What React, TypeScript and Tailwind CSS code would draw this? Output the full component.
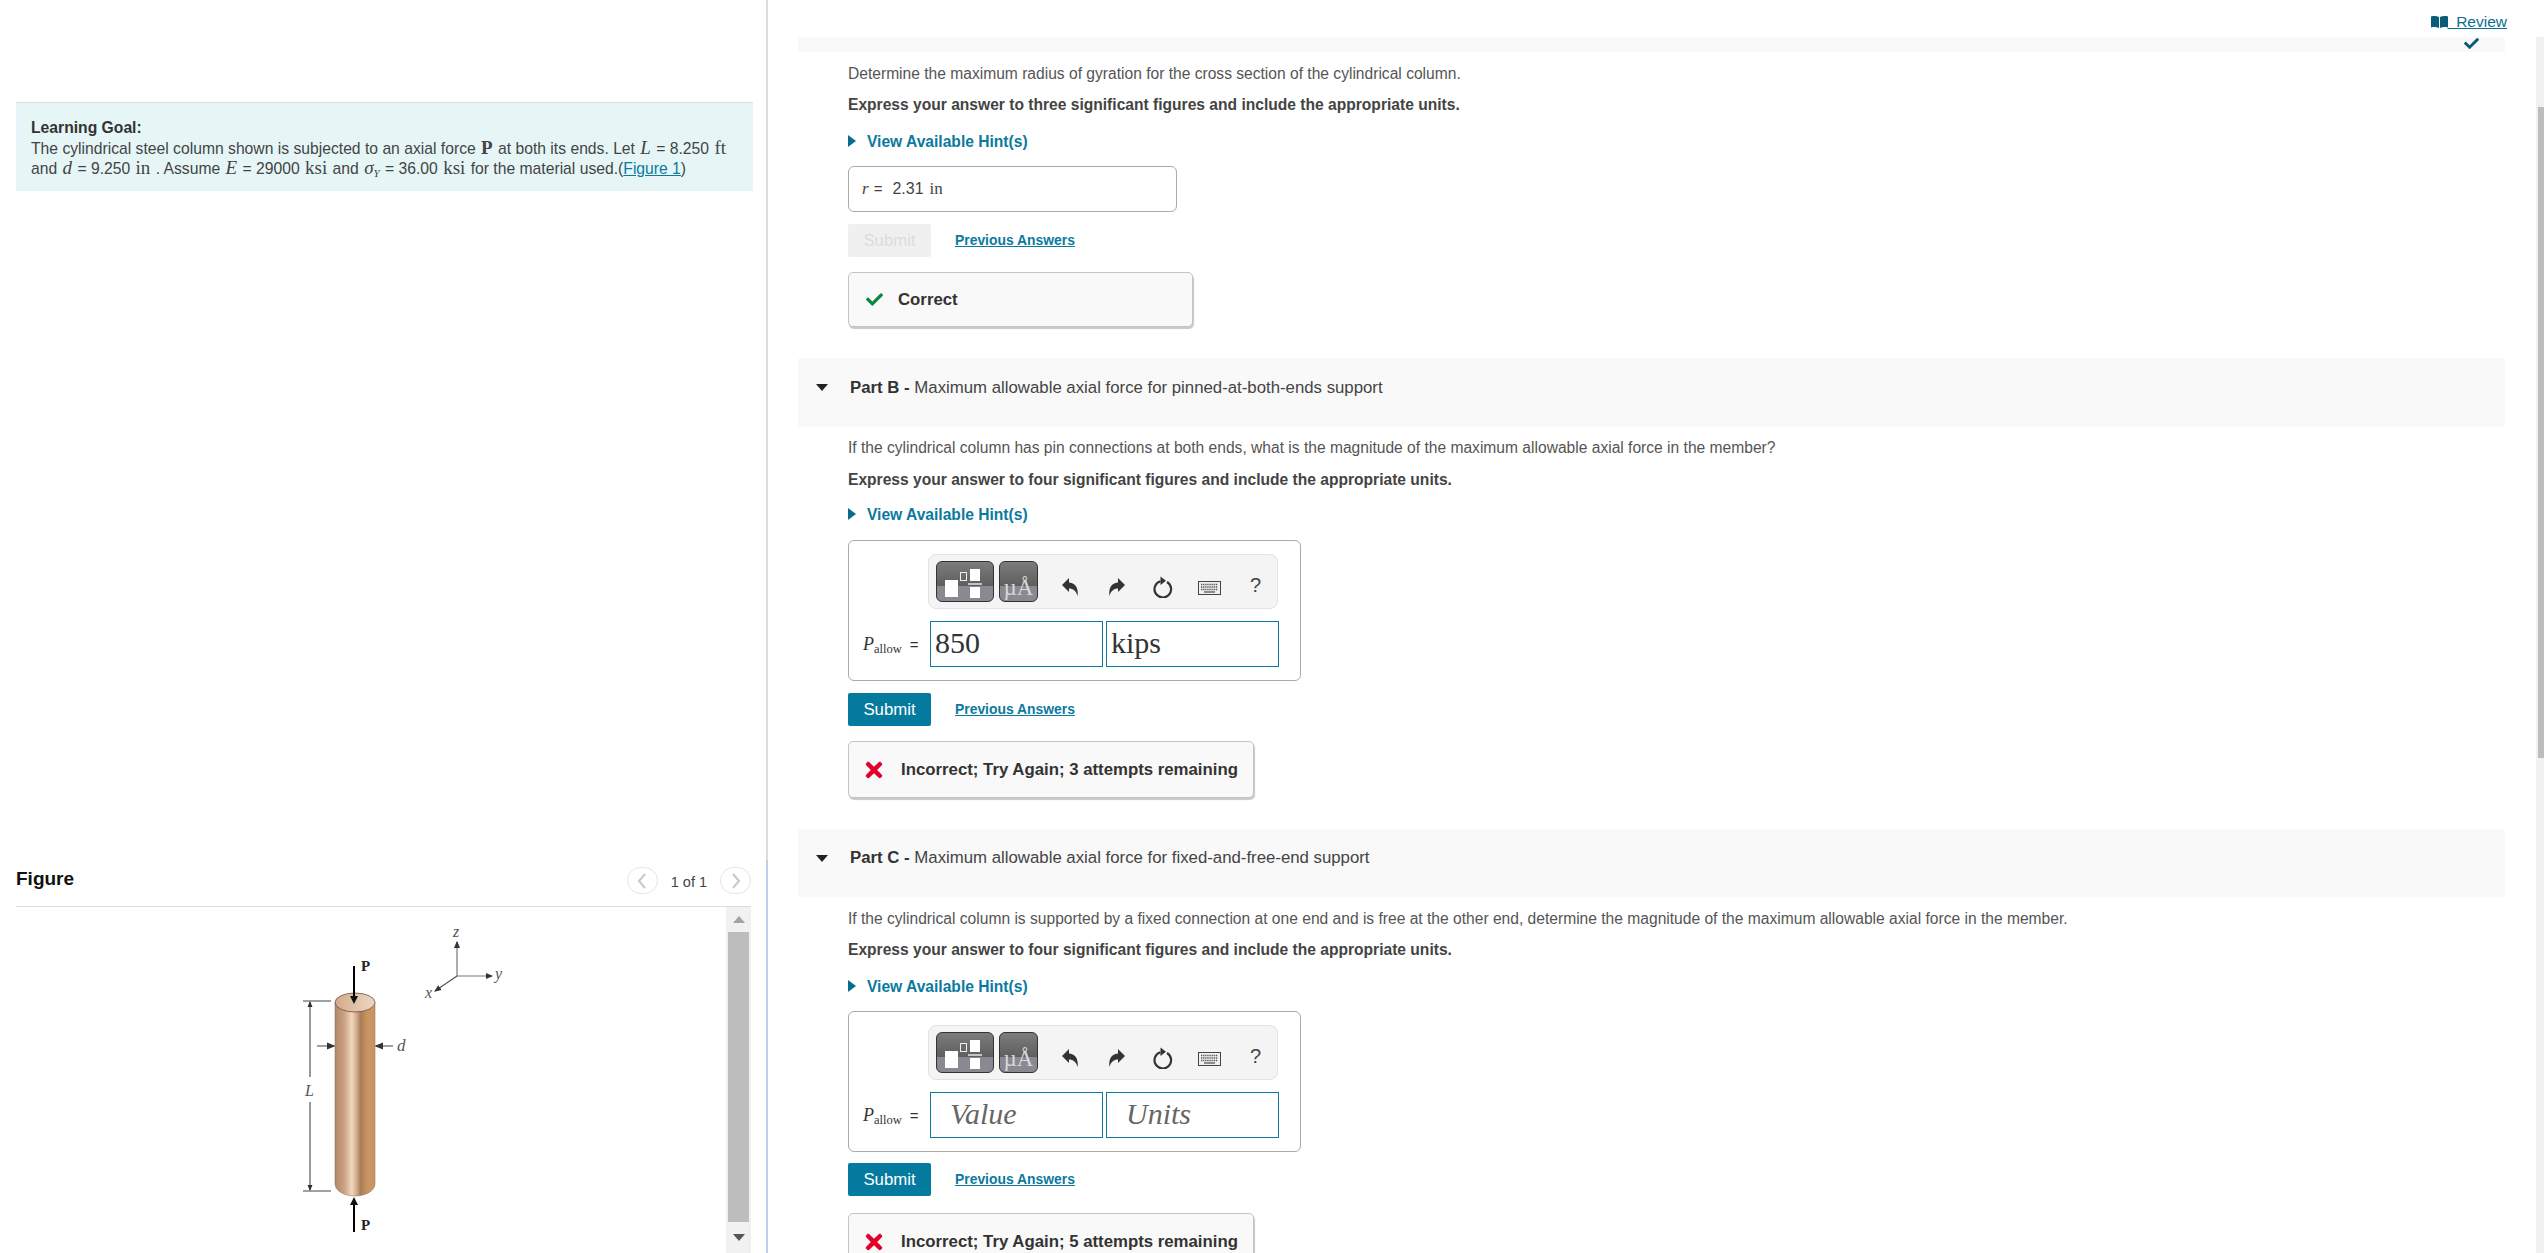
import { ReactNode } from "react";
import { FaCheck, FaTimes } from "react-icons/fa";

const Serif = ({ children, className = "" }: { children: ReactNode; className?: string }) => (
  <span className={`font-['Liberation_Serif',serif] ${className}`}>{children}</span>
);

const Triangle = ({ dir, className }: { dir: "right" | "down" | "up"; className: string }) => {
  const points = dir === "right" ? "0,0 8,6 0,12" : dir === "down" ? "0,0 12,0 6,7" : "0,7 12,7 6,0";
  const size = dir === "right" ? [8, 12] : [12, 7];
  return (
    <svg width={size[0]} height={size[1]} viewBox={`0 0 ${size[0]} ${size[1]}`} className={className}>
      <polygon points={points} fill="currentColor" />
    </svg>
  );
};

const Hint = ({ className }: { className: string }) => (
  <div className={`flex items-center h-5 pt-0.5 text-[#0b7a9e] text-[15.6px] font-bold ${className}`}>
    <Triangle dir="right" className="text-[#0a6c8c] mr-[11px] -mt-0.5" />
    <span>View Available Hint(s)</span>
  </div>
);

const PreviousAnswers = () => (
  <a className="ml-6 text-[13.9px] font-bold text-[#0b7a9e] underline">Previous Answers</a>
);

const Feedback = ({ ok, text, className }: { ok: boolean; text: string; className: string }) => (
  <div className={`flex items-center rounded-[5px] border border-[#c4c4c4] bg-[#f9f9f9] shadow-[1px_2px_1px_#c8c8c8] text-[16.8px] font-bold text-[#333] ${className}`}>
    {ok ? (
      <FaCheck size={17} className="ml-[17px] mr-[15px] text-[#0a8a3f]" />
    ) : (
      <FaTimes size={24} className="ml-[13px] mr-[15px] text-[#e4002b]" />
    )}
    <span>{text}</span>
  </div>
);

const PartHeader = ({ part, title, className }: { part: string; title: string; className: string }) => (
  <div className={`flex items-center pb-2.5 bg-[#f9f9f9] ${className}`}>
    <Triangle dir="down" className="ml-[18px] mr-[22px] text-[#222]" />
    <span className="text-[16.8px] text-[#444]">
      <b className="text-[#333]">Part {part} - </b>
      {title}
    </span>
  </div>
);

const Undo = ({ flip }: { flip?: boolean }) => (
  <svg width="16" height="18" viewBox="0 0 16 18" className={flip ? "-scale-x-100" : ""}>
    <path d="M0 7 L7 0 V4.5 C12 4.5 17 9 15.5 18 C14.5 13 11 10.5 7 10.5 V14 Z" fill="#333" />
  </svg>
);

const Reset = () => (
  <svg width="21" height="22" viewBox="0 0 21 22">
    <path d="M15 6 A8.3 8.3 0 1 1 8.5 5.2" fill="none" stroke="#333" strokeWidth="2.2" />
    <polygon points="8.5,0.5 14,4.8 8.5,9" fill="#333" />
  </svg>
);

const Keyboard = () => (
  <svg width="23" height="14" viewBox="0 0 23 14">
    <rect x="0.5" y="0.5" width="22" height="13" fill="#f0f0f0" stroke="#444" />
    <path d="M3 3.5 H20 M3 6 H20 M3 8.5 H20" stroke="#555" strokeWidth="1.3" strokeDasharray="1.3 0.8" />
    <path d="M6 11 H17" stroke="#555" strokeWidth="1.3" />
  </svg>
);

const ToolButtons = () => (
  <div className="flex items-center ml-[79px] mt-[13px] w-[350px] h-[55px] rounded-lg border border-[#e2e2e2] bg-[#f4f4f4]">
    <div className="ml-[7px] w-[58px] h-[41px] rounded-md border border-[#333] bg-[linear-gradient(#7c7c7c_0%,#5e5e5e_62%,#8a8890_62%,#8a8890_100%)]">
      <svg width="56" height="39" viewBox="0 0 56 39">
        <rect x="8" y="18" width="13" height="17" fill="#fff" />
        <rect x="23.5" y="10.5" width="6" height="8" fill="none" stroke="#eee" />
        <rect x="33" y="7" width="10" height="12" fill="#fff" />
        <rect x="31" y="21" width="14" height="2" fill="#c4c4c4" />
        <rect x="33" y="25" width="10" height="11" fill="#fff" />
      </svg>
    </div>
    <div className="ml-[5px] w-[39px] h-[41px] rounded-md border border-[#333] bg-[linear-gradient(#7c7c7c_0%,#5e5e5e_62%,#8a8890_62%,#8a8890_100%)] flex items-end justify-center">
      <Serif className="text-[23px] leading-[26px] text-[#d8d8d8]">µÅ</Serif>
    </div>
    <div className="ml-6 mt-[10px] flex items-center">
      <Undo />
      <span className="ml-[31px]"><Undo flip /></span>
      <span className="ml-[27px]"><Reset /></span>
      <span className="ml-[25px] mt-[3px]"><Keyboard /></span>
      <span className="ml-[29px] -mt-[3px] text-[20px] leading-none text-[#444]">?</span>
    </div>
  </div>
);

const AnswerBox = ({ value, unit, muted, className }: { value: string; unit: string; muted?: boolean; className: string }) => {
  const tone = muted ? "italic text-[#666] pl-[19px]" : "text-[#333] pl-[4px]";
  return (
    <div className={`w-[453px] h-[141px] rounded-md border border-[#aaa] ${className}`}>
      <ToolButtons />
      <div className="flex items-center mt-3 h-[46px]">
        <div className="w-[81px] pl-[14px] text-[15px] text-[#333] whitespace-nowrap">
          <Serif className="italic text-[18px]">P</Serif>
          <Serif className="text-[12.5px] relative top-[3px]">allow</Serif>
          <span className="ml-2">=</span>
        </div>
        <div className={`w-[173px] h-[46px] border border-[#0b7a9e] text-[30px] leading-[42px] font-['Liberation_Serif',serif] ${tone}`}>{value}</div>
        <div className={`ml-[3px] w-[173px] h-[46px] border border-[#0b7a9e] text-[30px] leading-[42px] font-['Liberation_Serif',serif] ${tone}`}>{unit}</div>
      </div>
    </div>
  );
};

const SubmitRow = ({ disabled, className }: { disabled?: boolean; className: string }) => (
  <div className={`flex items-center ${className}`}>
    <div className={`w-[83px] h-[33px] rounded-[2px] flex items-center justify-center text-[16.8px] ${disabled ? "bg-[#f0f0f0] text-[#dcdcdc]" : "bg-[#057a9f] text-white"}`}>
      Submit
    </div>
    <PreviousAnswers />
  </div>
);

const Line = ({ bold, className, children }: { bold?: boolean; className: string; children: ReactNode }) => (
  <p className={`h-5 leading-[22px] whitespace-nowrap ${bold ? "text-[15.6px] font-bold text-[#444]" : "text-[15.6px] text-[#555]"} ${className}`}>{children}</p>
);

const ColumnFigure = () => (
  <svg width="250" height="346" viewBox="270 907 250 346" className="ml-[254px]">
    <defs>
      <linearGradient id="body" x1="0" x2="1" y1="0" y2="0">
        <stop offset="0" stopColor="#b08868" />
        <stop offset="0.22" stopColor="#c9a080" />
        <stop offset="0.42" stopColor="#f0d8c0" />
        <stop offset="0.55" stopColor="#d0a888" />
        <stop offset="0.64" stopColor="#a67c5c" />
        <stop offset="0.8" stopColor="#c8945f" />
        <stop offset="1" stopColor="#c99664" />
      </linearGradient>
      <linearGradient id="cap" x1="0" x2="1" y1="0" y2="0">
        <stop offset="0" stopColor="#d4aa8a" />
        <stop offset="1" stopColor="#ecd8c4" />
      </linearGradient>
      <marker id="head" markerWidth="6" markerHeight="6" refX="5" refY="3" orient="auto">
        <path d="M0 0.5 L6 3 L0 5.5 Z" fill="#333" />
      </marker>
      <marker id="headBack" markerWidth="6" markerHeight="6" refX="1" refY="3" orient="auto">
        <path d="M6 0.5 L0 3 L6 5.5 Z" fill="#333" />
      </marker>
    </defs>
    <path d="M335 1002 V1184 A20 12 0 0 0 375 1184 V1002 Z" fill="url(#body)" stroke="#8a6a50" strokeWidth="0.5" />
    <ellipse cx="355" cy="1002.5" rx="20" ry="9.5" fill="url(#cap)" stroke="#6a5040" strokeWidth="0.8" />
    <path d="M354 966 V1000" stroke="#000" strokeWidth="2" />
    <polygon points="350,996 358,996 354,1004" fill="#111" />
    <path d="M354 1232 V1202" stroke="#000" strokeWidth="2" />
    <polygon points="350,1205 358,1205 354,1197" fill="#111" />
    <path d="M303 1001 H331 M303 1191 H331" stroke="#444" strokeWidth="1" />
    <path d="M310 1002 V1077" stroke="#333" strokeWidth="1" markerStart="url(#headBack)" />
    <path d="M310 1102 V1190" stroke="#333" strokeWidth="1" markerEnd="url(#head)" />
    <path d="M317 1046 H334" stroke="#777" strokeWidth="1.4" markerEnd="url(#head)" />
    <path d="M393 1046 H376" stroke="#777" strokeWidth="1.4" markerEnd="url(#head)" />
    <path d="M457 976 V942" stroke="#777" strokeWidth="1.2" markerEnd="url(#head)" />
    <path d="M457 976 H492" stroke="#777" strokeWidth="1.2" markerEnd="url(#head)" />
    <path d="M457 976 L435 991" stroke="#555" strokeWidth="1.2" markerEnd="url(#head)" />
    <g fontFamily="'Liberation Serif', serif">
      <text x="361" y="971" fontSize="15" fontWeight="700" fill="#222">P</text>
      <text x="361" y="1230" fontSize="15" fontWeight="700" fill="#222">P</text>
      <g fontStyle="italic" fontSize="16" fill="#555">
        <text x="305" y="1096">L</text>
        <text x="397" y="1051" fontSize="17">d</text>
        <text x="453" y="937">z</text>
        <text x="495" y="979">y</text>
        <text x="425" y="998">x</text>
      </g>
    </g>
  </svg>
);

const Math = ({ children, italic, bold }: { children: ReactNode; italic?: boolean; bold?: boolean }) => (
  <Serif className={`text-[19px] mx-px ${italic ? "italic" : ""} ${bold ? "font-bold" : ""}`}>{children}</Serif>
);

const LeftPane = () => (
  <div className="w-[766px] shrink-0 h-full flex flex-col">
    <div className="ml-4 mt-[102px] w-[737px] h-[89px] border-t border-[#dcdcdc] bg-[#e6f6f7] pl-[15px] pt-[15px] text-[15.7px] leading-[19.5px] text-[#444] whitespace-nowrap">
      <div className="font-bold text-[#333]">Learning Goal:</div>
      <div>
        The cylindrical steel column shown is subjected to an axial force <Math bold>P</Math> at both its ends. Let <Math italic>L</Math> = 8.250 <Math>ft</Math>
      </div>
      <div>
        and <Math italic>d</Math> = 9.250 <Math>in</Math> . Assume <Math italic>E</Math> = 29000 <Math>ksi</Math> and <Math italic>σ<sub className="text-[11px] leading-[0]">Y</sub></Math> = 36.00 <Math>ksi</Math> for the material used.(<a className="text-[#0b7a9e] underline">Figure 1</a>)
      </div>
    </div>
    <div className="ml-4 mt-[671px] w-[735px] h-[45px] border-b border-[#dcdcdc] flex items-start relative">
      <div className="mt-[3px] text-[19px] font-bold text-[#111]">Figure</div>
      <div className="ml-auto flex items-center mt-[5px]">
        <div className="w-[31px] h-[27px] rounded-full border border-[#e4e4e4] flex items-center justify-center">
          <svg width="10" height="16" viewBox="0 0 10 16"><path d="M8 1 L2 8 L8 15" fill="none" stroke="#c8c8c8" strokeWidth="2" /></svg>
        </div>
        <span className="mx-[13px] mt-1 text-[14.5px] text-[#444]">1 of 1</span>
        <div className="w-[31px] h-[27px] rounded-full border border-[#e4e4e4] flex items-center justify-center">
          <svg width="10" height="16" viewBox="0 0 10 16"><path d="M2 1 L8 8 L2 15" fill="none" stroke="#c8c8c8" strokeWidth="2" /></svg>
        </div>
      </div>
    </div>
    <div className="ml-4 w-[735px] flex-1 flex overflow-hidden">
      <div className="w-[710px] shrink-0">
        <ColumnFigure />
      </div>
      <div className="w-[25px] h-full bg-[#f1f1f1] flex flex-col items-center">
        <div className="h-[25px] flex items-center"><Triangle dir="up" className="text-[#a3a3a3]" /></div>
        <div className="w-[21px] h-[290px] bg-[#bdbdbd]" />
        <div className="h-[31px] flex items-center"><Triangle dir="down" className="text-[#555]" /></div>
      </div>
    </div>
  </div>
);

const RightPane = () => (
  <div className="relative flex-1 h-full overflow-hidden">
    <div className="h-[37px] w-[1739px] flex justify-end items-start pt-[12px] text-[#0b6f90] text-[15.5px] leading-5">
      <svg width="17" height="12" viewBox="0 0 17 12" className="mt-[4px]">
        <path d="M0 0.5 C3 -0.3 6 0 8 1 V12 C6 11 3 10.7 0 11.5 Z M9 1 C11 0 14 -0.3 17 0.5 V11.5 C14 10.7 11 11 9 12 Z" fill="#0b5c78" />
      </svg>
      <a className="underline whitespace-pre">{"  Review"}</a>
    </div>
    <div className="ml-[30px] w-[1707px]">
      <div className="relative h-[15px] bg-[#f9f9f9]">
        <FaCheck size={15} className="absolute right-[26px] -top-[1px] text-[#0b5c78]" />
      </div>
      <div className="pl-[50px]">
        <Line className="mt-[11px]">Determine the maximum radius of gyration for the cross section of the cylindrical column.</Line>
        <Line bold className="mt-[11px]">Express your answer to three significant figures and include the appropriate units.</Line>
        <Hint className="mt-[17px]" />
        <div className="mt-[15px] w-[329px] h-[46px] rounded-md border border-[#aaa] flex items-center pl-[13px] text-[15px] text-[#444]">
          <Serif className="italic text-[17px]">r</Serif>
          <span className="ml-[5px]">=</span>
          <span className="ml-[10px] text-[16px]">2.31</span>
          <Serif className="ml-[6px] text-[17px]">in</Serif>
        </div>
        <SubmitRow disabled className="mt-3" />
        <Feedback ok text="Correct" className="mt-[15px] w-[345px] h-[55px]" />
      </div>
      <PartHeader part="B" title="Maximum allowable axial force for pinned-at-both-ends support" className="mt-[31px] h-[69px]" />
      <div className="pl-[50px]">
        <Line className="mt-[10px]">If the cylindrical column has pin connections at both ends, what is the magnitude of the maximum allowable axial force in the member?</Line>
        <Line bold className="mt-3">Express your answer to four significant figures and include the appropriate units.</Line>
        <Hint className="mt-[15px]" />
        <AnswerBox value="850" unit="kips" className="mt-4" />
        <SubmitRow className="mt-3" />
        <Feedback ok={false} text="Incorrect; Try Again; 3 attempts remaining" className="mt-[15px] w-[406px] h-[57px]" />
      </div>
      <PartHeader part="C" title="Maximum allowable axial force for fixed-and-free-end support" className="mt-[31px] h-[68px]" />
      <div className="pl-[50px]">
        <Line className="mt-[11px]">If the cylindrical column is supported by a fixed connection at one end and is free at the other end, determine the magnitude of the maximum allowable axial force in the member.</Line>
        <Line bold className="mt-[11px]">Express your answer to four significant figures and include the appropriate units.</Line>
        <Hint className="mt-[17px]" />
        <AnswerBox muted value="Value" unit="Units" className="mt-[15px]" />
        <SubmitRow className="mt-[11px]" />
        <Feedback ok={false} text="Incorrect; Try Again; 5 attempts remaining" className="mt-[17px] w-[406px] h-[57px]" />
      </div>
    </div>
    {/* page scrollbar */}
    <div className="absolute right-0 top-[37px] bottom-0 w-2 bg-[#f1f1f1]">
      <div className="absolute right-0 top-[70px] w-1.5 h-[651px] bg-[#bdbdbd]" />
    </div>
  </div>
);

export default function App() {
  return (
    <div className="flex w-[2544px] h-[1253px] overflow-hidden bg-white font-['Liberation_Sans',Arial,sans-serif]">
      <LeftPane />
      <div className="w-0.5 shrink-0 h-full flex flex-col">
        <div className="h-[860px] bg-[#dddddd]" />
        <div className="flex-1 bg-[#b9d0e6]" />
      </div>
      <RightPane />
    </div>
  );
}
